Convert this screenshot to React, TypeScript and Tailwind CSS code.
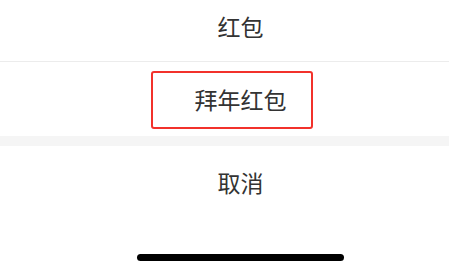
const font = { fontFamily: '"Noto Sans CJK SC", "Noto Sans", sans-serif' };

function SheetRow({ label, className }: { label: string; className: string }) {
  return (
    <div className={`flex items-center justify-center pl-[32px] text-[23px] text-[#333333] ${className}`}>
      {label}
    </div>
  );
}

export default function App() {
  return (
    <main className="h-[270px] w-[449px] overflow-hidden bg-white" style={font}>
      <SheetRow label="红包" className="h-[52px] leading-none" />
      <div className="h-[9px]" />
      <div className="h-px bg-[#ececec]" />
      <div className="relative">
        <SheetRow label="拜年红包" className="h-[74px] leading-none" />
        <div className="pointer-events-none absolute left-[151px] top-[9px] h-[58px] w-[162px] rounded-[3px] border-2 border-[#f2312b]" />
      </div>
      <div className="h-[10px] bg-[#f5f5f5]" />
      <SheetRow label="取消" className="h-[73px] leading-none" />
      <div className="flex justify-center pl-[32px] pt-[35px]">
        <div className="h-[7px] w-[207px] rounded-full bg-black" />
      </div>
    </main>
  );
}
